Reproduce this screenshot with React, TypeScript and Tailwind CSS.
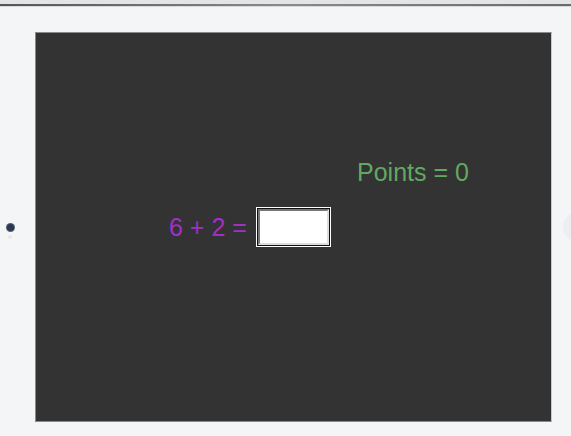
import React from 'react';

const App: React.FC = () => {
  return (
    <div className="h-[436px] w-[571px] overflow-hidden bg-[#f4f5f7] font-['Liberation_Sans',Arial,sans-serif]">
      {/* Device top edge */}
      <div className="h-[4px] bg-[#e4e4e4]"></div>
      <div className="h-[2px] bg-gradient-to-r from-[#555] via-[#8a8a8a] to-[#6a6a6a]"></div>
      <div className="h-[1px] bg-[#d9d9d9]"></div>

      <div className="mt-[25px] flex">
        {/* Left bezel */}
        <div className="flex w-[35px] shrink-0 flex-col items-start justify-center gap-[4px] pl-[7px]">
          <div className="h-[4px] w-[4px]"></div>
          <div className="h-[7px] w-[7px] rounded-full bg-[#2c3850] ring-1 ring-[#55606f]"></div>
          <div className="ml-[1px] h-[4px] w-[4px] rounded-full bg-[#e6e7ea]"></div>
        </div>

        {/* Screen */}
        <div className="h-[390px] w-[517px] shrink-0 border border-[#8a8a8a] border-r-[#c8c8c8] bg-[#333333] pt-[125px]">
          <div className="ml-[321px] text-[25px] leading-[28px] text-[#62a862]">Points = 0</div>
          <div className="ml-[133px] mt-[21px] flex h-[40px] items-center gap-[9px]">
            <span className="text-[25px] leading-[28px] text-[#a030c8]">6 + 2 =</span>
            <div className="h-[40px] w-[75px] shrink-0 bg-white p-px">
              <div className="h-full w-full border border-[#111]">
                <input
                  type="text"
                  className="block h-full w-full border-2 border-t-[#777] border-l-[#777] border-b-[#ddd] border-r-[#ddd] bg-white outline-none"
                />
              </div>
            </div>
          </div>
        </div>

        {/* Right bezel with home button */}
        <div className="flex flex-1 items-center">
          <div className="ml-[11px] h-[30px] w-[30px] shrink-0 rounded-full bg-[#eceef1]"></div>
        </div>
      </div>
    </div>
  );
};

export default App;
